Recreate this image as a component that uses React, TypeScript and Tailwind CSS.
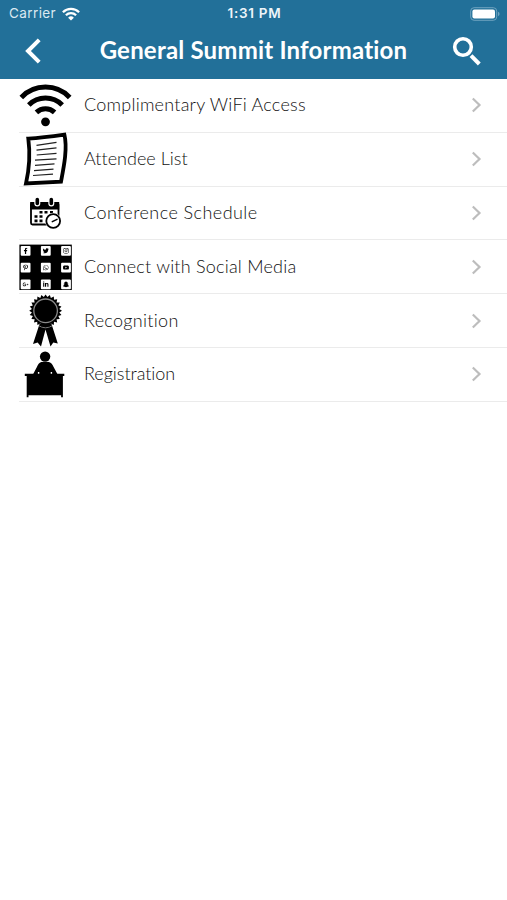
import type { ReactNode } from 'react'
import {
  FaFacebookF, FaTwitter, FaInstagram, FaPinterestP, FaWhatsapp,
  FaYoutube, FaGooglePlusG, FaLinkedinIn, FaSnapchatGhost,
} from 'react-icons/fa'

interface Item {
  label: string
  icon: ReactNode
  tracking: string
}

const SOCIAL = [
  FaFacebookF, FaTwitter, FaInstagram,
  FaPinterestP, FaWhatsapp, FaYoutube,
  FaGooglePlusG, FaLinkedinIn, FaSnapchatGhost,
]

// Toothed edge of the award rosette
const ROSETTE = Array.from({ length: 48 }, (_, i) => {
  const r = i % 2 === 0 ? 16.4 : 13.8
  const a = (i / 48) * Math.PI * 2
  return `${(26.6 + r * Math.cos(a)).toFixed(2)},${(16.8 + r * Math.sin(a)).toFixed(2)}`
}).join(' ')

function IconBox({ children }: { children: ReactNode }) {
  return (
    <svg viewBox="0 0 54 54" className="w-[54px] h-[54px] shrink-0 overflow-visible" fill="none">
      {children}
    </svg>
  )
}

function WifiIcon() {
  return (
    <IconBox>
      <g stroke="#000" strokeWidth="5">
        <path d="M2.3 19.4A33.5 33.5 0 0 1 50.7 19.4" />
        <path d="M9.8 26.9A23.5 23.5 0 0 1 43.2 26.9" />
        <path d="M17.4 34.4A13.3 13.3 0 0 1 35.6 34.4" />
      </g>
      <circle cx="26.5" cy="43.8" r="4.4" fill="#000" />
    </IconBox>
  )
}

function PaperIcon() {
  return (
    <IconBox>
      <path d="M9.3 6.6C20 6 33 4.4 45.4 2.6C48.6 16 45 34 42 49.6L7 51.4C10.5 36 11.2 21 9.3 6.6Z" fill="#fff" stroke="#000" strokeWidth="3.8" />
      <path
        d="M17.5 13.3L37.5 10.3M17.5 18.1L37.5 15.8M17.7 23L37.5 21.3M16 28.1L37.5 26.8M16 33.3L35.5 31.8M15 38.6L34.5 37.1M14 43.5L34 42.1"
        stroke="#222" strokeWidth="1.2"
      />
    </IconBox>
  )
}

function CalendarIcon() {
  return (
    <IconBox>
      <rect x="12" y="17" width="27.5" height="21.5" rx="1.5" stroke="#000" strokeWidth="1.8" />
      <path d="M11.2 16h29v7.5h-29z" fill="#000" />
      <path d="M18.3 13.5v4M32.3 13.5v4" stroke="#fff" strokeWidth="6" strokeLinecap="round" />
      <path d="M18.3 13.5v4M32.3 13.5v4" stroke="#000" strokeWidth="3.6" strokeLinecap="round" />
      <path
        d="M20.5 25h3v2.6h-3zM25.5 25h3v2.6h-3zM31 25h3v2.6h-3zM15.5 29.2h3v2.6h-3zM20.5 29.2h3v2.6h-3zM15.5 33.6h3v2.6h-3zM20.5 33.6h3v2.6h-3z"
        fill="#000"
      />
      <circle cx="34.2" cy="35" r="8.2" fill="#fff" />
      <circle cx="34.2" cy="35" r="6.9" stroke="#000" strokeWidth="1.8" />
      <path d="M33.3 35.7L38 33.4" stroke="#000" strokeWidth="1.5" strokeLinecap="round" />
    </IconBox>
  )
}

function SocialIcon() {
  return (
    <IconBox>
      <rect x="0.4" y="4.6" width="52.4" height="45.4" fill="#000" />
      {SOCIAL.map((Glyph, i) => {
        const x = 1.7 + (i % 3) * 20.2
        const y = 5.9 + Math.floor(i / 3) * 16.8
        return (
          <g key={i}>
            <rect x={x} y={y} width="9.8" height="9.8" rx="1" fill="#fff" />
            <Glyph x={x + 1.8} y={y + 1.8} size={6.2} color="#000" />
          </g>
        )
      })}
    </IconBox>
  )
}

function RosetteIcon() {
  return (
    <IconBox>
      <path d="M20.5 30L14 50L18.6 48.6L22 52.5L26.5 35.5L31.5 52.5L34.3 48.4L38.8 49.6L32.5 30Z" fill="#000" />
      <path d="M20 31.8Q26.5 35.8 33 31.8" stroke="#aaa" strokeWidth="0.7" />
      <polygon points={ROSETTE} fill="#000" />
      <circle cx="26.6" cy="16.8" r="11.8" stroke="#8a8a8a" strokeWidth="1.3" />
    </IconBox>
  )
}

function DeskIcon() {
  return (
    <IconBox>
      <g fill="#000">
        <circle cx="26.1" cy="9.6" r="5.2" />
        <path d="M22.3 15h7.6c2.4.7 3.6 2.6 4.7 5l3.8 7H14.2l3.7-7c1.1-2.4 2.2-4.3 4.4-5z" />
        <path d="M5.8 26.8h39.5v2.2h-1.4v21.2h-1.8v-2H9.5v2H7.7V29H5.8z" />
      </g>
      <path d="M19.6 25v1.8M32.4 25v1.8" stroke="#fff" strokeWidth="1.4" />
    </IconBox>
  )
}

const ITEMS: Item[] = [
  { label: 'Complimentary WiFi Access', icon: <WifiIcon />, tracking: 'tracking-[0.24px]' },
  { label: 'Attendee List', icon: <PaperIcon />, tracking: 'tracking-[0.02px]' },
  { label: 'Conference Schedule', icon: <CalendarIcon />, tracking: 'tracking-[0.44px]' },
  { label: 'Connect with Social Media', icon: <SocialIcon />, tracking: 'tracking-[0.22px]' },
  { label: 'Recognition', icon: <RosetteIcon />, tracking: 'tracking-[0.3px]' },
  { label: 'Registration', icon: <DeskIcon />, tracking: 'tracking-[-0.04px]' },
]

function StatusBar() {
  return (
    <div className="grid grid-cols-[1fr_auto_1fr] items-center h-[27px] pl-[9px] pr-[7px] font-['Inter',sans-serif] leading-none">
      <div className="flex items-center gap-[6px]">
        <span className="pt-px text-[13.5px] tracking-[0.4px] text-[#dbe9f1]">Carrier</span>
        <svg viewBox="0 0 18 14" className="w-[18px] h-[14px]" fill="none" stroke="#fff" strokeWidth="2.3">
          <path d="M0.9 5.2A11.6 11.6 0 0 1 17.1 5.2" />
          <path d="M3.9 8.3A7.3 7.3 0 0 1 14.1 8.3" />
          <path d="M9 13.6L6.1 10.7A4.1 4.1 0 0 1 11.9 10.7Z" fill="#fff" stroke="none" />
        </svg>
      </div>
      <span className="pt-px text-[13.5px] font-semibold tracking-[0.7px] text-[#eef5f9]">1:31 PM</span>
      <svg viewBox="0 0 30 14" className="w-[30px] h-[14px] justify-self-end">
        <rect x="0.7" y="0.7" width="26" height="12.6" rx="3.4" fill="none" stroke="#6fa3bf" strokeWidth="1" />
        <rect x="2.4" y="2.4" width="22.6" height="9.2" rx="2" fill="#fff" />
        <path d="M28 4.8q1.6.6 1.6 2.2t-1.6 2.2z" fill="#6fa3bf" />
      </svg>
    </div>
  )
}

export default function App() {
  return (
    <div className="w-full h-[900px] bg-white overflow-hidden font-['Lato',sans-serif]">
      <header className="h-[79px] bg-[#227099] text-white">
        <StatusBar />
        <div className="grid grid-cols-[1fr_auto_1fr] items-center h-[48px] px-[25px]">
          <svg viewBox="0 0 16 26" className="w-4 h-[26px]" fill="none" stroke="#fff" strokeWidth="4">
            <path d="M14.2 1.8L3 13L14.2 24.2" />
          </svg>
          <h1 className="pb-[2px] text-[24px] leading-none font-bold tracking-[0.2px] whitespace-nowrap">General Summit Information</h1>
          <svg viewBox="0 0 30 30" className="w-[30px] h-[30px] justify-self-end" fill="none" stroke="#fff">
            <circle cx="11" cy="11" r="8.3" strokeWidth="3.6" />
            <path d="M19 19.6L27.3 28" strokeWidth="4" />
          </svg>
        </div>
      </header>

      <ul>
        {ITEMS.map((item) => (
          <li key={item.label} className="h-[53.8px] pl-[19px]">
            <div className="flex items-center h-full pr-[25px] border-b border-[#ebebeb]">
              {item.icon}
              <span className={`flex-1 pl-[11px] pb-[2px] text-[18px] leading-none font-light text-[#111] whitespace-nowrap ${item.tracking}`}>
                {item.label}
              </span>
              <svg viewBox="0 0 11 16" className="w-[11px] h-4" fill="none" stroke="#bdbdbd" strokeWidth="2.2">
                <path d="M1.8 1.5L8.5 8L1.8 14.5" />
              </svg>
            </div>
          </li>
        ))}
      </ul>
    </div>
  )
}
